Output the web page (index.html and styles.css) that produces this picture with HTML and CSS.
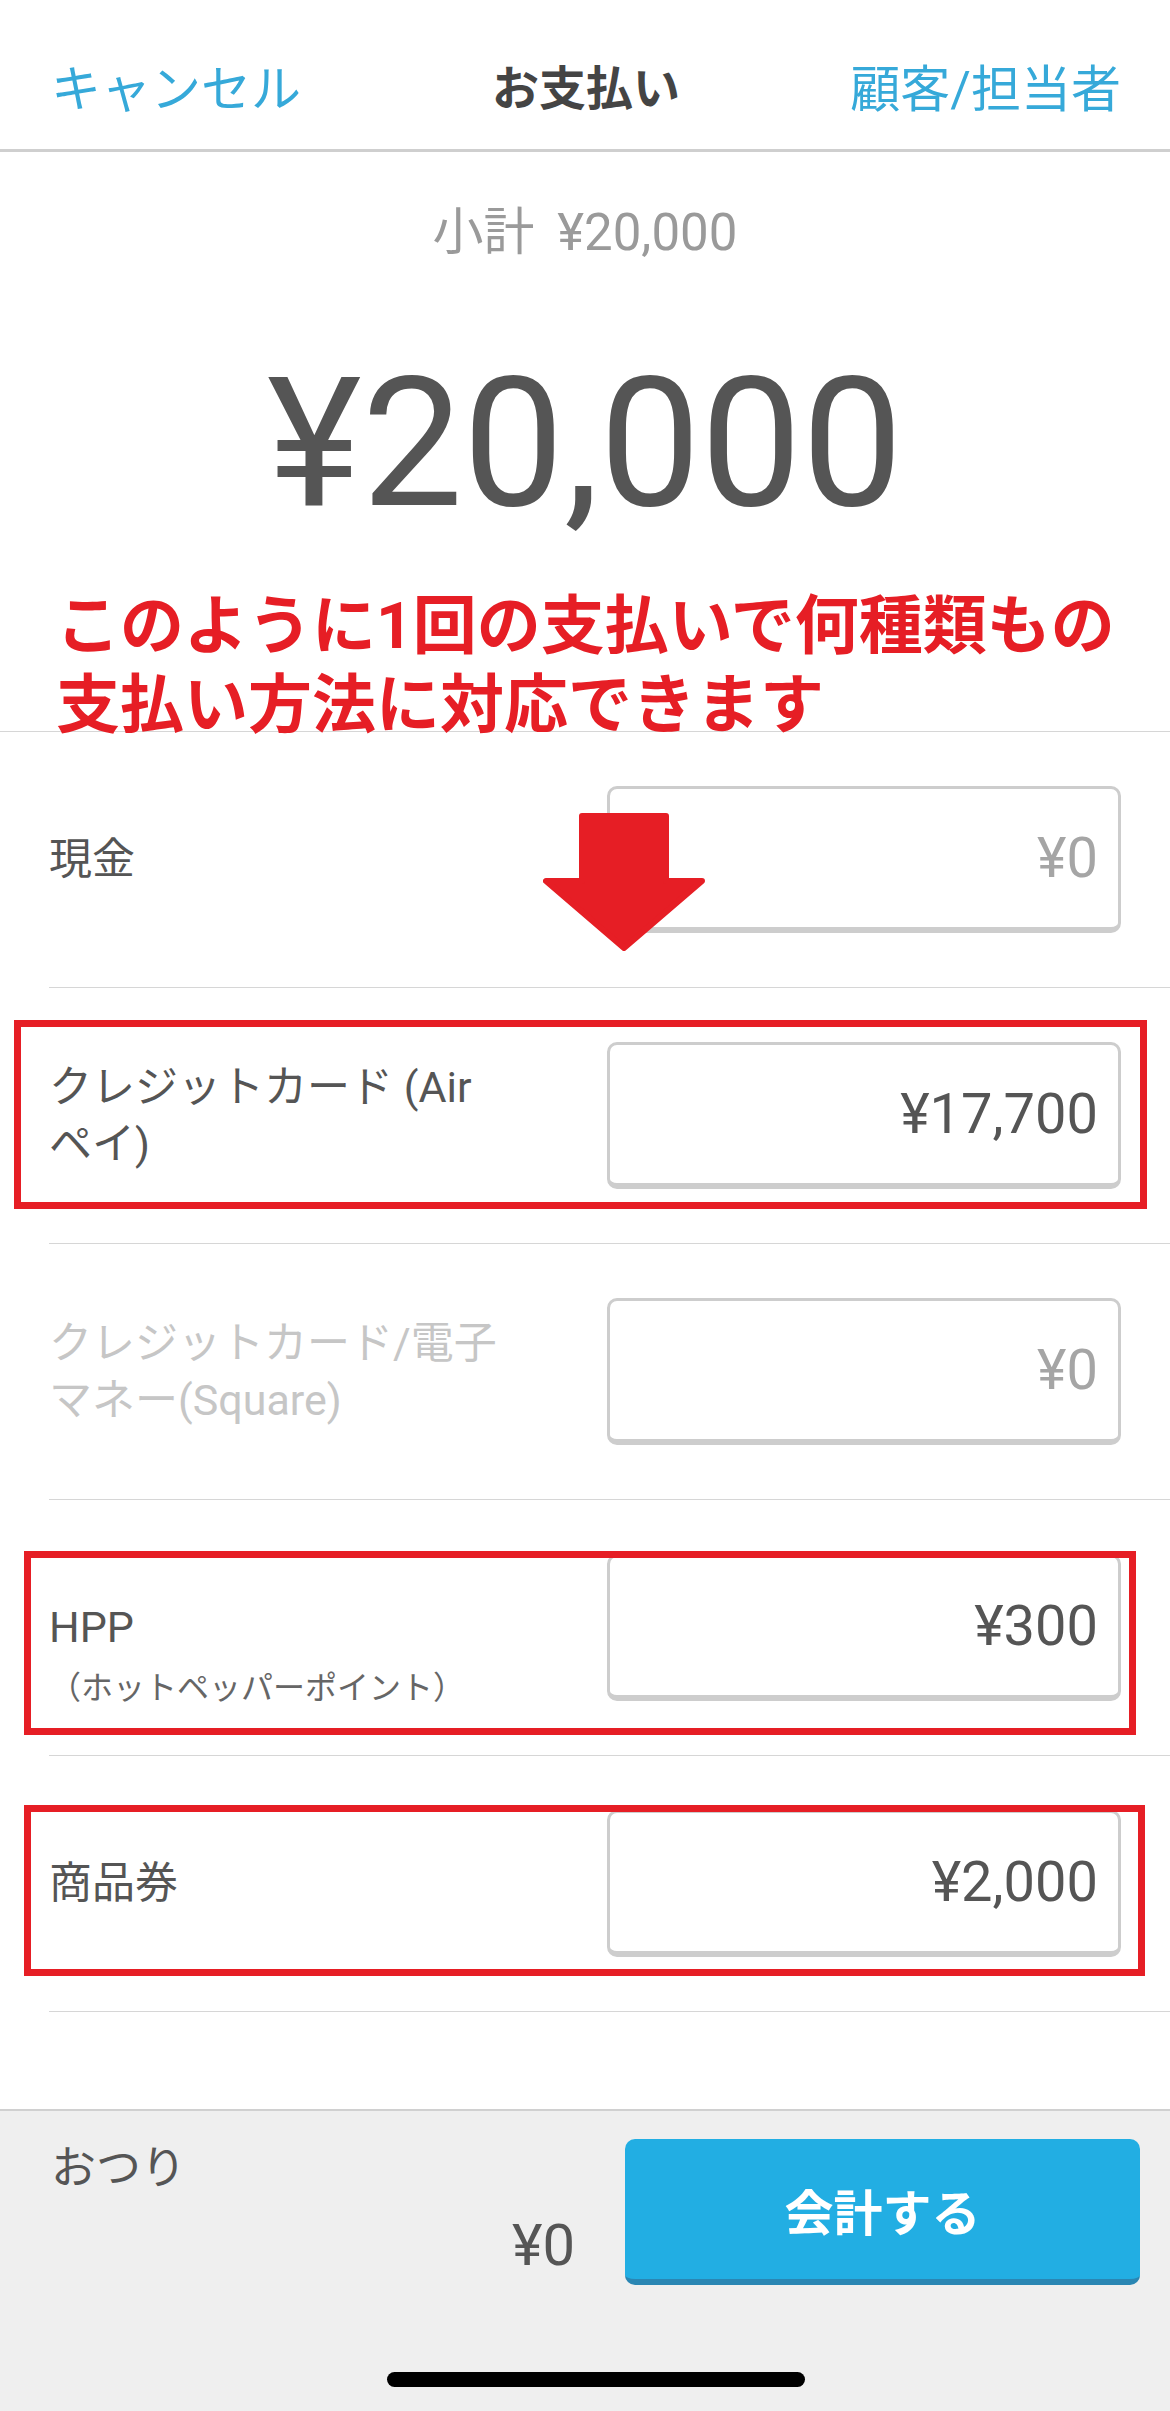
FILE: index.html
```html
<!DOCTYPE html>
<html lang="ja">
<head>
  <meta charset="UTF-8" />
  <title>お支払い</title>
  <link rel="stylesheet" href="styles.css">
</head>
<body>
  <div class="page">
    <header class="nav">
      <a class="nav-link" href="#">キャンセル</a>
      <h1 class="nav-title">お支払い</h1>
      <a class="nav-link nav-right" href="#">顧客/担当者</a>
    </header>

    <section class="summary">
      <p class="subtotal">小計 ¥20,000</p>
      <p class="total">¥20,000</p>
      <p class="note">このように1回の支払いで何種類もの<br>支払い方法に対応できます</p>
    </section>

    <ul class="methods">
      <li class="method">
        <span class="method-label">現金</span>
        <span class="amount amount-empty">¥0</span>
        <svg class="arrow" viewBox="0 0 162 138">
          <path d="M39 3 H123 V68 H159 L81 135 L3 68 H39 Z" fill="#e61e25" stroke="#e61e25" stroke-width="6" stroke-linejoin="round"/>
        </svg>
      </li>
      <li class="method">
        <span class="method-label">クレジットカード (Air<br>ペイ)</span>
        <span class="amount">¥17,700</span>
        <span class="mark mark-air"></span>
      </li>
      <li class="method method-off">
        <span class="method-label">クレジットカード/電子<br>マネー(Square)</span>
        <span class="amount amount-empty">¥0</span>
      </li>
      <li class="method">
        <span class="method-label method-label-hpp">
          HPP
          <small class="method-sub">（ホットペッパーポイント）</small>
        </span>
        <span class="amount">¥300</span>
        <span class="mark mark-hpp"></span>
      </li>
      <li class="method">
        <span class="method-label">商品券</span>
        <span class="amount">¥2,000</span>
        <span class="mark mark-gift"></span>
      </li>
    </ul>

    <footer class="checkout">
      <div class="checkout-row">
        <div class="change">
          <span class="change-label">おつり</span>
          <span class="change-value">¥0</span>
        </div>
        <button class="pay-button" type="button">会計する</button>
      </div>
      <div class="home-bar"></div>
    </footer>
  </div>
</body>
</html>
```

FILE: styles.css
```css
body {
  margin: 0;
  font-family: Roboto, "Noto Sans CJK JP", sans-serif;
  color: #555;
  background-color: #fff;
}

.page {
  min-height: 2411px;
  display: flex;
  flex-direction: column;
}

/* top bar */
.nav {
  display: grid;
  grid-template-columns: 1fr auto 1fr;
  align-items: center;
  height: 152px;
  box-sizing: border-box;
  padding: 20px 49px 0 51px;
  border-bottom: 3px solid #cfcfcf;
}

.nav-link {
  color: #36a9d9;
  font-size: 50px;
  text-decoration: none;
}

.nav-right {
  justify-self: end;
}

.nav-title {
  margin: 0;
  font-size: 47px;
  font-weight: 700;
  color: #444;
}

/* amounts */
.summary {
  position: relative;
  height: 579px;
  border-bottom: 1px solid #d6d6d6;
  text-align: center;
}

.subtotal {
  margin: 0;
  padding-top: 51px;
  font-size: 51px;
  line-height: 60px;
  word-spacing: 10px;
  color: #9a9a9a;
}

.total {
  margin: 81px 0 0;
  font-size: 180px;
  line-height: 200px;
  color: #555;
}

.note {
  position: absolute;
  left: 56px;
  top: 435px;
  margin: 0;
  text-align: left;
  font-size: 64px;
  line-height: 79px;
  font-weight: 700;
  color: #e61e25;
}

/* payment rows */
.methods {
  list-style: none;
  margin: 0;
  padding: 0;
}

.method {
  position: relative;
  display: flex;
  align-items: center;
  gap: 30px;
  margin-left: 49px;
  padding: 54px 49px 54px 0;
  border-bottom: 1px solid #d6d6d6;
}

.method-label {
  flex: 1;
  font-size: 43px;
  line-height: 57px;
  color: #555;
}

.method-off .method-label {
  color: #c6c6c6;
}

.method-label-hpp {
  margin-bottom: -64px;
}

.method-sub {
  display: block;
  font-size: 32px;
  line-height: 64px;
  color: #666;
}

.amount {
  width: 514px;
  height: 147px;
  box-sizing: border-box;
  display: flex;
  align-items: center;
  justify-content: flex-end;
  padding: 0 20px;
  border: 3px solid #cdcdcd;
  border-bottom-width: 6px;
  border-radius: 10px;
  font-size: 56px;
  color: #555;
}

.amount-empty {
  color: #a5a5a5;
}

.arrow {
  position: absolute;
  left: 494px;
  top: 81px;
  width: 162px;
  height: 138px;
}

.mark {
  position: absolute;
  border: 7px solid #e61e25;
}

.mark-air {
  top: 32px;
  bottom: 34px;
  left: -35px;
  right: 23px;
}

.mark-hpp {
  top: 51px;
  bottom: 20px;
  left: -25px;
  right: 34px;
}

.mark-gift {
  top: 49px;
  bottom: 35px;
  left: -25px;
  right: 25px;
}

/* bottom bar */
.checkout {
  margin-top: auto;
  background-color: #efefef;
  border-top: 2px solid #d0d0d0;
  padding: 28px 30px 24px 51px;
}

.checkout-row {
  display: flex;
  gap: 50px;
}

.change {
  flex: 1;
  display: flex;
  flex-direction: column;
  justify-content: space-between;
}

.change-label {
  font-size: 45px;
  line-height: 60px;
}

.change-value {
  align-self: flex-end;
  font-size: 58px;
  line-height: 80px;
}

.pay-button {
  width: 515px;
  height: 146px;
  border: none;
  border-bottom: 6px solid #2a86b3;
  border-radius: 10px;
  background-color: #22aee3;
  color: white;
  font-family: inherit;
  font-size: 49px;
  font-weight: 700;
  cursor: pointer;
}

.home-bar {
  width: 418px;
  height: 15px;
  margin: 87px auto 0;
  border-radius: 8px;
  background-color: #000;
}
```
